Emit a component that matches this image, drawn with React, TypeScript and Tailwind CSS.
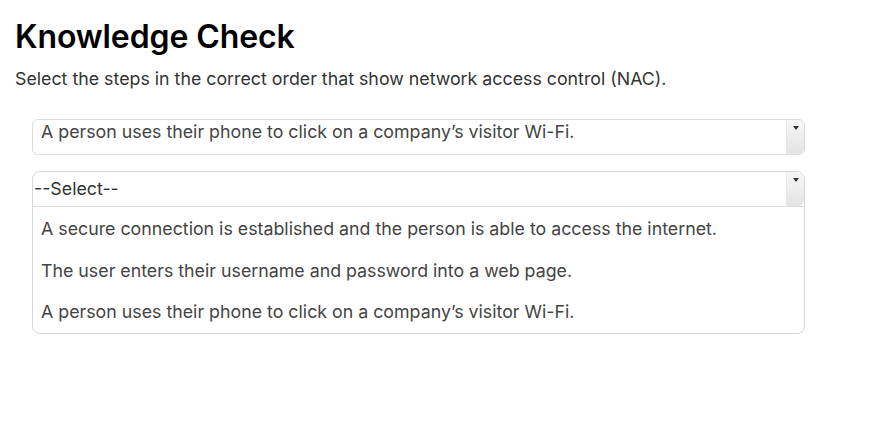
const options = [
  'A secure connection is established and the person is able to access the internet.',
  'The user enters their username and password into a web page.',
  'A person uses their phone to click on a company\u2019s visitor Wi-Fi.',
];

const ScrollButton = () => (
  <div className="flex w-[18px] shrink-0 justify-center rounded-tr-[6px] rounded-br-[6px] border-l border-[#e6e6e6] bg-gradient-to-b from-[#f6f6f6] to-[#e4e4e4] pt-[6px]">
    <svg width="6" height="4" viewBox="0 0 6 4">
      <path d="M0 0 H6 L3 4 Z" fill="#333" />
    </svg>
  </div>
);

export default function App() {
  return (
    <div className="min-h-screen bg-white px-[15px] pt-[18px] font-['Inter',sans-serif]">
      <h1 className="text-[32px] font-semibold leading-[38px] tracking-[-0.1px] text-black">Knowledge Check</h1>
      <p className="mt-[11px] text-[17.8px] leading-[24px] text-[#333]">
        Select the steps in the correct order that show network access control (NAC).
      </p>

      <div className="mt-[28px] flex w-[790px] flex-col gap-[16px] pl-[17px]">
        <div className="flex h-[36px] overflow-hidden rounded-[6px] border border-[#dcdcdc]">
          <div className="flex-1 truncate pl-[8px] pt-[1px] text-[17.8px] leading-[22px] text-[#444]">
            A person uses their phone to click on a company’s visitor Wi-Fi.
          </div>
          <ScrollButton />
        </div>

        <div className="flex flex-col rounded-[8px] border border-[#d6d6d6]">
          <div className="flex h-[35px] border-b border-[#dcdcdc]">
            <div className="flex flex-1 items-center pl-[1px] text-[17.8px] text-[#333]">--Select--</div>
            <ScrollButton />
          </div>
          <ul className="flex flex-col pt-[1px]">
            {options.map((o) => (
              <li key={o} className="px-[8px] py-[8px] text-[17.8px] leading-[25.5px] text-[#444]">
                {o}
              </li>
            ))}
          </ul>
        </div>
      </div>
    </div>
  );
}
